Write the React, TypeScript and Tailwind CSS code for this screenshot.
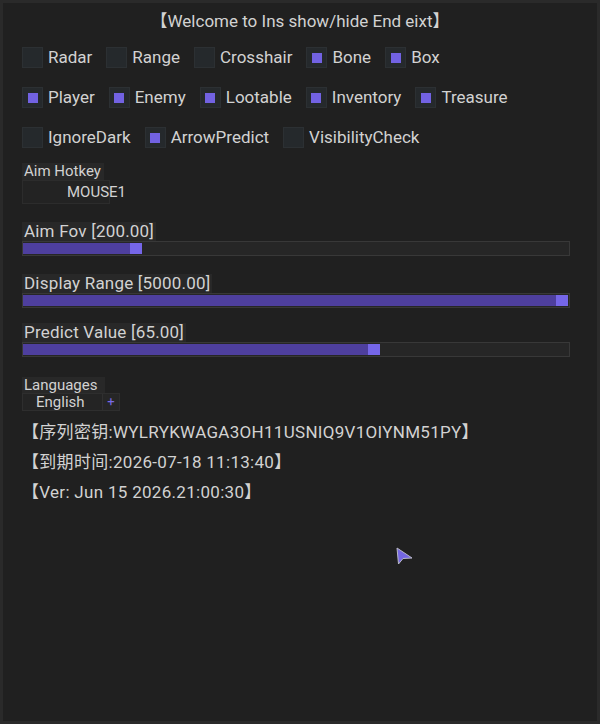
import React from "react"

const rows = [
  [
    { label: "Radar", on: false },
    { label: "Range", on: false },
    { label: "Crosshair", on: false },
    { label: "Bone", on: true },
    { label: "Box", on: true },
  ],
  [
    { label: "Player", on: true },
    { label: "Enemy", on: true },
    { label: "Lootable", on: true },
    { label: "Inventory", on: true },
    { label: "Treasure", on: true },
  ],
  [
    { label: "IgnoreDark", on: false },
    { label: "ArrowPredict", on: true },
    { label: "VisibilityCheck", on: false },
  ],
]

function Check({ label, on }: { label: string; on: boolean }) {
  return (
    <div className="flex items-center gap-[5px]">
      <div className="w-[21px] h-[21px] bg-[#25292c] border border-[#2c3033] flex items-center justify-center">
        {on && <div className="w-[10px] h-[10px] bg-[#7262e2]" />}
      </div>
      <span className="leading-[21px]">{label}</span>
    </div>
  )
}

function Slider({ label, fill, mt }: { label: string; fill: number; mt: string }) {
  return (
    <div className={mt}>
      <div className="h-[19px] flex">
        <span className="bg-[#282828] px-[2px] leading-[19px] tracking-[0.2px]">{label}</span>
      </div>
      <div className="w-[548px] h-[15px] bg-[#262626] border border-[#383838] flex py-[1px]">
        <div className="bg-[#4e3f9e]" style={{ width: fill }} />
        <div className="w-[12px] bg-[#7566e8]" />
      </div>
    </div>
  )
}

export default function App() {
  return (
    <div
      className="w-[600px] h-[724px] bg-[#2a2a2a] p-[3px] text-[17px] text-[#d2d2d2]"
      style={{ fontFamily: 'Roboto, "Noto Sans CJK SC", sans-serif' }}
    >
      <div className="relative w-full h-full bg-[#202020] pl-[19px] pt-[8px]">
        <div className="h-[20px] leading-[20px] text-center pr-[19px]">【Welcome to Ins show/hide End eixt】</div>

        <div className="mt-[16px] flex flex-col gap-[19px]">
          {rows.map((row, i) => (
            <div key={i} className="flex gap-[14px]">
              {row.map((c) => (
                <Check key={c.label} label={c.label} on={c.on} />
              ))}
            </div>
          ))}
        </div>

        {/* hotkey */}
        <div className="mt-[15px] text-[15px]">
          <div className="h-[17px] flex">
            <span className="bg-[#282828] pl-[2px] pr-[3px] leading-[17px]">Aim Hotkey</span>
          </div>
          <div className="w-[88px] h-[24px] bg-[#232323] border border-[#2c2c2c] pl-[44px] leading-[22px] whitespace-nowrap">
            MOUSE1
          </div>
        </div>

        <Slider label="Aim Fov [200.00]" fill={107} mt="mt-[18px]" />
        <Slider label="Display Range [5000.00]" fill={533} mt="mt-[18px]" />
        <Slider label="Predict Value [65.00]" fill={345} mt="mt-[15px]" />

        {/* languages */}
        <div className="mt-[20px] text-[15px]">
          <div className="h-[16px] flex">
            <span className="bg-[#282828] pl-[2px] pr-[7px] leading-[16px]">Languages</span>
          </div>
          <div className="w-[98px] h-[18px] bg-[#242424] border border-[#2e2e2e] flex">
            <span className="flex-1 pl-[13px] leading-[16px]">English</span>
            <span className="w-[17px] bg-[#262626] border-l border-[#303030] text-[#7a6ae8] text-[13px] leading-[16px] text-center">
              +
            </span>
          </div>
        </div>

        <div className="mt-[6px] leading-[30px] tracking-[0.3px]">
          <div>【序列密钥:WYLRYKWAGA3OH11USNIQ9V1OIYNM51PY】</div>
          <div>【到期时间:2026-07-18 11:13:40】</div>
          <div>【Ver: Jun 15 2026.21:00:30】</div>
        </div>

        {/* mouse cursor */}
        <svg className="absolute left-[393px] top-[544px]" width="18" height="18" viewBox="0 0 18 18">
          <path d="M1 1 L2.5 17 L7 11.5 L16 11 Z" fill="#7466e2" stroke="#b8b8c8" strokeWidth="1" strokeLinejoin="round" />
        </svg>
      </div>
    </div>
  )
}
